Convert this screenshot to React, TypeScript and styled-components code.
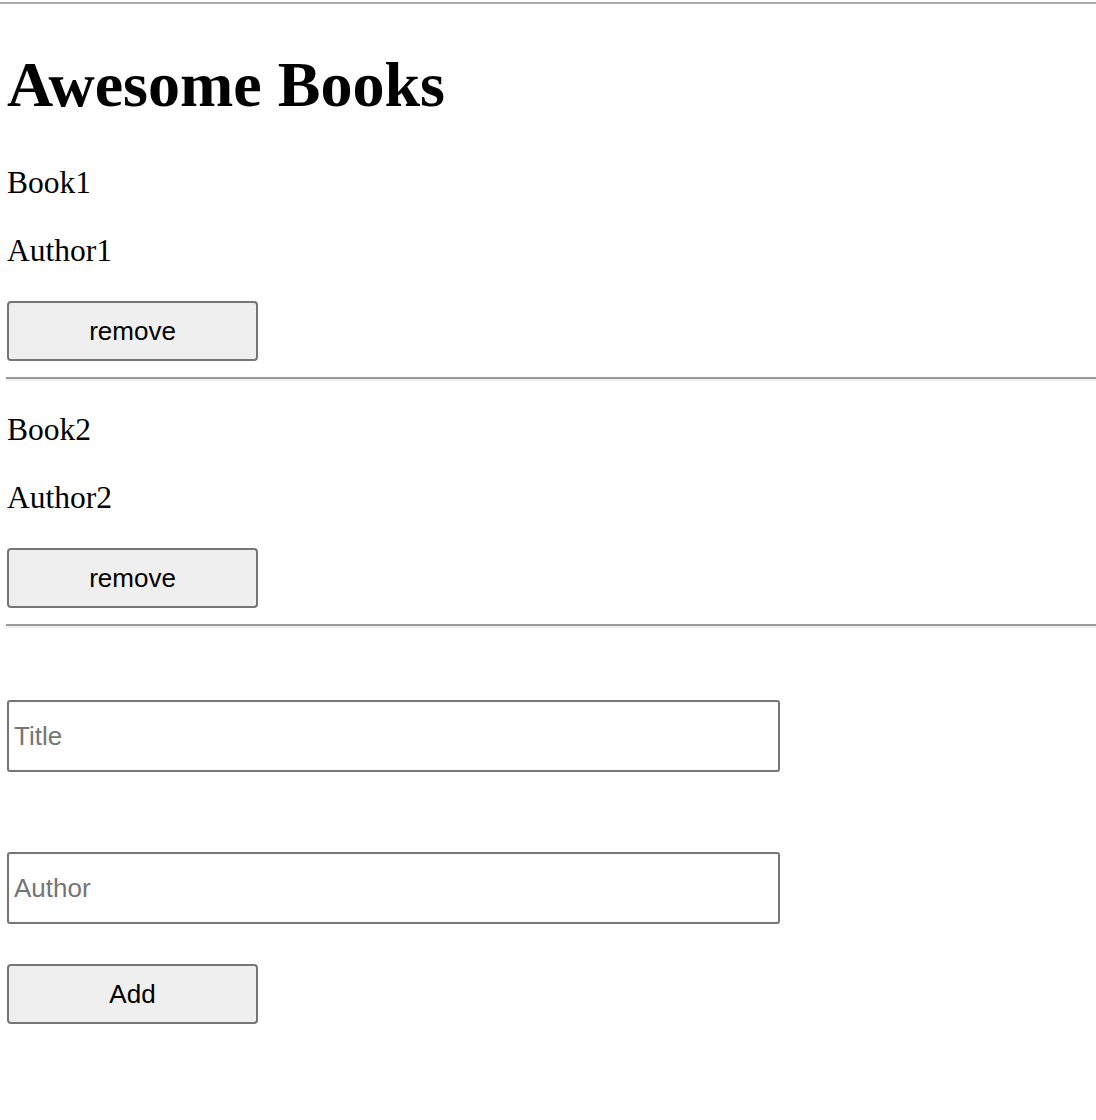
import React from "react";
import styled, { createGlobalStyle } from "styled-components";

const GlobalStyle = createGlobalStyle`
  html, body {
    margin: 0;
    padding: 0;
    background: #ffffff;
  }
  body {
    font-family: "Liberation Serif", "Times New Roman", serif;
    color: #000000;
  }
  * {
    box-sizing: border-box;
  }
`;

const TopRule = styled.div`
  margin-top: 2px;
  height: 2px;
  background: #ababab;
  width: 100%;
`;

const Main = styled.main`
  display: flex;
  flex-direction: column;
  padding-left: 7px;
`;

const Heading = styled.h1`
  margin: 49px 0 0 0;
  font-size: 64px;
  line-height: 64px;
  font-weight: 700;
  font-family: "Liberation Serif", "Times New Roman", serif;
`;

const BookList = styled.section`
  display: flex;
  flex-direction: column;
  margin-top: 51px;
`;

const BookItem = styled.article<{ $first?: boolean }>`
  display: flex;
  flex-direction: column;
  align-items: flex-start;
  margin-top: ${(p) => (p.$first ? "0" : "34px")};
`;

const BookText = styled.p<{ $gap?: number }>`
  margin: ${(p) => p.$gap ?? 0}px 0 0 0;
  font-size: 31.5px;
  line-height: 30px;
`;

const Button = styled.button<{ $gap?: number }>`
  margin-top: ${(p) => p.$gap ?? 0}px;
  width: 251px;
  height: 60px;
  background: #efefef;
  border: 2px solid #767676;
  border-radius: 4px;
  font-family: "Liberation Sans", Arial, sans-serif;
  font-size: 26px;
  color: #000000;
  padding: 0;
  cursor: pointer;
`;

const Divider = styled.hr`
  align-self: stretch;
  margin: 16px 0 0 -1px;
  height: 0;
  border: 0;
  border-top: 2px solid #9a9a9a;
  border-bottom: 2px solid #eeeeee;
`;

const Form = styled.form`
  display: flex;
  flex-direction: column;
  align-items: flex-start;
  margin-top: 72px;
`;

const Field = styled.input<{ $gap?: number }>`
  margin-top: ${(p) => p.$gap ?? 0}px;
  width: 773px;
  height: 72px;
  border: 2px solid #767676;
  border-radius: 3px;
  padding: 0 5px;
  font-family: "Liberation Sans", Arial, sans-serif;
  font-size: 26px;
  color: #000000;
  background: #ffffff;
  &::placeholder {
    color: #757575;
  }
`;

const books = [
  { title: "Book1", author: "Author1" },
  { title: "Book2", author: "Author2" },
];

export default function App() {
  return (
    <>
      <GlobalStyle />
      <TopRule />
      <Main>
        <Heading>Awesome Books</Heading>
        <BookList>
          {books.map((b, i) => (
            <BookItem key={b.title} $first={i === 0}>
              <BookText>{b.title}</BookText>
              <BookText $gap={38}>{b.author}</BookText>
              <Button type="button" $gap={35}>
                remove
              </Button>
              <Divider />
            </BookItem>
          ))}
        </BookList>
        <Form onSubmit={(e) => e.preventDefault()}>
          <Field type="text" placeholder="Title" />
          <Field type="text" placeholder="Author" $gap={80} />
          <Button type="submit" $gap={40}>
            Add
          </Button>
        </Form>
      </Main>
    </>
  );
}
